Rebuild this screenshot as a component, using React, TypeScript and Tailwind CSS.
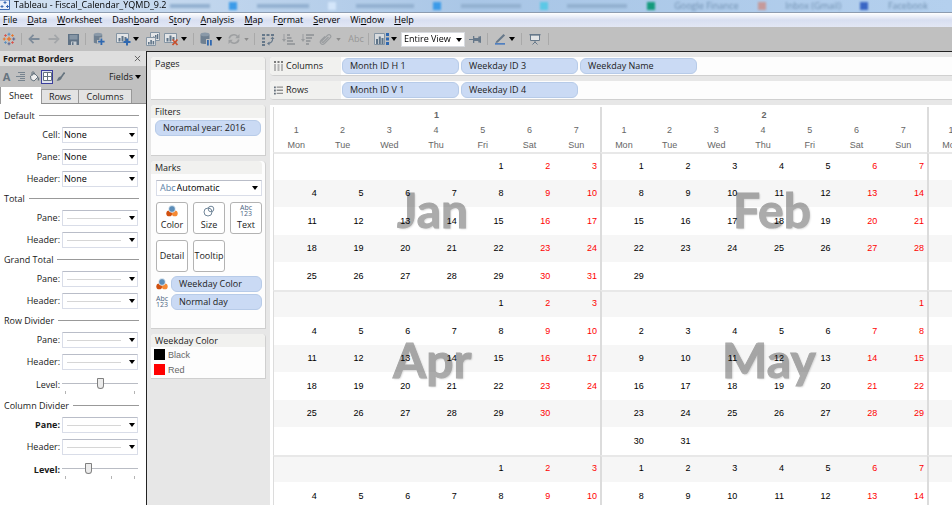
import React from 'react'

const menus = [
  { before: '', key: 'F', after: 'ile' },
  { before: '', key: 'D', after: 'ata' },
  { before: '', key: 'W', after: 'orksheet' },
  { before: 'Dash', key: 'b', after: 'oard' },
  { before: 'S', key: 't', after: 'ory' },
  { before: '', key: 'A', after: 'nalysis' },
  { before: '', key: 'M', after: 'ap' },
  { before: 'F', key: 'o', after: 'rmat' },
  { before: '', key: 'S', after: 'erver' },
  { before: 'Wi', key: 'n', after: 'dow' },
  { before: '', key: 'H', after: 'elp' },
]

interface Row {
  label: string
  value?: string
  bold?: boolean
  steps?: number
  level?: number
}

interface Section {
  title: string
  rows: Row[]
}

const sections: Section[] = [
  {
    title: 'Default',
    rows: [
      { label: 'Cell:', value: 'None' },
      { label: 'Pane:', value: 'None' },
      { label: 'Header:', value: 'None' },
    ],
  },
  { title: 'Total', rows: [{ label: 'Pane:' }, { label: 'Header:' }] },
  { title: 'Grand Total', rows: [{ label: 'Pane:' }, { label: 'Header:' }] },
  {
    title: 'Row Divider',
    rows: [{ label: 'Pane:' }, { label: 'Header:' }, { label: 'Level:', steps: 2, level: 1 }],
  },
  {
    title: 'Column Divider',
    rows: [
      { label: 'Pane:', bold: true },
      { label: 'Header:' },
      { label: 'Level:', bold: true, steps: 3, level: 1 },
    ],
  },
]

const weekdays = ['Mon', 'Tue', 'Wed', 'Thu', 'Fri', 'Sat', 'Sun']

// offset = empty cells before day 1, weeks = rows kept for each block
const blocks = [
  { weeks: 5, months: [{ offset: 4, days: 31 }, { offset: 0, days: 29 }] },
  { weeks: 6, months: [{ offset: 4, days: 30 }, { offset: 6, days: 31 }] },
  { weeks: 2, months: [{ offset: 4, days: 31 }, { offset: 0, days: 31 }] },
]

function Caret({ muted }: { muted?: boolean }) {
  return (
    <svg viewBox="0 0 6 4" className={muted ? 'w-[5px] h-[3px] text-[#8c8c8c]' : 'w-[6px] h-[4px] text-black'}>
      <path d="M0 0h6L3 4z" fill="currentColor" />
    </svg>
  )
}

function ColorIcon() {
  return (
    <svg viewBox="0 0 12 12" className="w-3 h-3">
      <circle cx="3.2" cy="8.4" r="2.9" fill="#d1500f" />
      <circle cx="8.8" cy="8.4" r="2.9" fill="#f58a35" />
      <circle cx="6" cy="4" r="3.4" fill="#5b8db8" stroke="#fff" strokeWidth=".7" />
    </svg>
  )
}

function AbcIcon() {
  return (
    <span className="block text-[7px] leading-[6px] text-center text-[#4c657f]">
      Abc
      <br />
      123
    </span>
  )
}

function Tool({ label, className, children }: { label: string; className: string; children: React.ReactNode }) {
  return (
    <button type="button" aria-label={label} className={'shrink-0 flex items-center justify-center ' + className}>
      {children}
    </button>
  )
}

function Divider({ className }: { className: string }) {
  return <span className={'shrink-0 w-px h-3 bg-[#a9a9a9] ' + className} />
}

function Toolbar() {
  return (
    <div className="flex items-center h-[24px] pl-[2px] bg-[#c0c0c0] overflow-hidden">
      <Tool label="Start page" className="w-[14px]">
        <svg viewBox="0 0 14 14" className="w-[14px] h-[14px]" fill="none" strokeWidth="1.1">
          <path d="M7 4.8v4.4M4.8 7h4.4" stroke="#e8762c" strokeWidth="1.4" />
          <path d="M7 .8v3M5.5 2.3h3" stroke="#5b8fbf" />
          <path d="M7 10.2v3M5.5 11.7h3" stroke="#5b6591" />
          <path d="M.8 7h3M2.3 5.5v3" stroke="#e8762c" />
          <path d="M10.2 7h3M11.7 5.5v3" stroke="#5b6591" />
          <path d="M3.5 2.2v2.6M2.2 3.5h2.6" stroke="#d9534a" />
          <path d="M10.5 2.2v2.6M9.2 3.5h2.6" stroke="#e8762c" />
          <path d="M3.5 9.2v2.6M2.2 10.5h2.6" stroke="#5b8fbf" />
          <path d="M10.5 9.2v2.6M9.2 10.5h2.6" stroke="#d9534a" />
        </svg>
      </Tool>
      <Divider className="ml-[5px]" />
      <Tool label="Undo" className="w-3 ml-[6px]">
        <svg viewBox="0 0 12 10" className="w-3 h-[10px]" fill="none" stroke="#7d8b99" strokeWidth="1.8">
          <path d="M5.5 .8L1.5 5l4 4.2M1.5 5h10" />
        </svg>
      </Tool>
      <Tool label="Redo" className="w-3 ml-2">
        <svg viewBox="0 0 12 10" className="w-3 h-[10px]" fill="none" stroke="#a3a6a9" strokeWidth="1.8">
          <path d="M6.5 .8l4 4.2-4 4.2M10.5 5H.5" />
        </svg>
      </Tool>
      <Tool label="Save" className="w-[11px] ml-2">
        <svg viewBox="0 0 11 11" className="w-[11px] h-[11px]">
          <path d="M0 0h11v11H0z" fill="#5f7285" />
          <path d="M1.5 1h8v4.5h-8z" fill="#8595a4" />
          <path d="M3 7.5h5.5V11H3z" fill="#c4cad0" />
          <path d="M4 8.3h1.5V11H4z" fill="#5f7285" />
        </svg>
      </Tool>
      <Divider className="ml-[6px]" />
      <Tool label="Add data source" className="w-3 ml-[7px]">
        <svg viewBox="0 0 12 14" className="w-3 h-[14px]">
          <path d="M.8 2.400v8c1.500 1.500 7 1.500 8.400 0v-8z" fill="#6f8091" />
          <ellipse cx="5" cy="2.4" rx="4.2" ry="1.6" fill="#8a99a8" />
          <path d="M6.500 5.500h3.500V8H12.500v3.500H10V14H6.500v-2.500H4V8h2.500z" fill="#c0c0c0" />
          <path d="M7.500 6.500h1.800v2.300H11.600v1.800H9.300v2.400H7.500v-2.400H5.100V8.800h2.400z" fill="#2f68b0" />
        </svg>
      </Tool>
      <Tool label="New worksheet" className="w-[15px] ml-[11px]">
        <svg viewBox="0 0 15 14" className="w-[15px] h-[14px]">
          <path d="M.5 1.5h12v9H.5z" fill="#e3e5e7" stroke="#8494a3" />
          <path d="M2.5 6h2v3.5h-2zM5.5 4h2v5.5h-2zM8.5 5h2v4.5h-2z" fill="#5f7488" />
          <path d="M10 6.5h2V9h2.5v2H12v2.5h-2V11H7.5V9H10z" fill="#2f68b0" />
        </svg>
      </Tool>
      <span className="shrink-0 ml-[2px]"><Caret /></span>
      <Tool label="Duplicate sheet" className="w-[14px] ml-[7px]">
        <svg viewBox="0 0 14 14" className="w-[14px] h-[14px]">
          <path d="M4.5 .5h9v8h-9z" fill="#e3e5e7" stroke="#8494a3" />
          <path d="M9 3h1.5v4H9zM11 2h1.3v5H11zM7 4.5h1.3V7H7z" fill="#5f7488" />
          <path d="M.5 5.5h9v8h-9z" fill="#e3e5e7" stroke="#8494a3" />
          <path d="M2 10h1.6v2.5H2zM4.3 8h1.6v4.5H4.3zM6.6 9h1.6v3.5H6.6z" fill="#5f7488" />
        </svg>
      </Tool>
      <Tool label="Clear sheet" className="w-[15px] ml-1">
        <svg viewBox="0 0 15 14" className="w-[15px] h-[14px]">
          <path d="M.5 1.5h12v9H.5z" fill="#e3e5e7" stroke="#8494a3" />
          <path d="M2.5 6h2v3.5h-2zM5.5 3.5h2v6h-2zM8.5 5h2v3h-2z" fill="#5f7488" />
          <path d="M8.5 7.5l5 5.5M13.5 7.5l-5 5.5" stroke="#c8502e" strokeWidth="1.7" />
        </svg>
      </Tool>
      <span className="shrink-0 ml-[2px]"><Caret /></span>
      <Divider className="ml-[6px]" />
      <Tool label="Pause auto updates" className="w-3 ml-[6px]">
        <svg viewBox="0 0 12 14" className="w-3 h-[14px]">
          <path d="M.5 2.400v8.300C1 11.700 3.500 12 6 12V7h3.500V2.400z" fill="#6f8091" />
          <ellipse cx="5" cy="2.4" rx="4.5" ry="1.8" fill="#8a99a8" />
          <path d="M7 8h1.8v5.500H7zM10 8h1.800v5.500H10z" fill="#2f68b0" />
        </svg>
      </Tool>
      <span className="shrink-0 ml-1"><Caret /></span>
      <Tool label="Refresh" className="w-3 ml-[6px]">
        <svg viewBox="0 0 12 12" className="w-3 h-3" fill="none" stroke="#9d9fa1" strokeWidth="1.6">
          <path d="M1.2 5.500C1.800 1.800 7 .5 9.500 3.500M10.800 6.500C10.200 10.200 5 11.500 2.500 8.500" />
          <path d="M11.500 1v4.200H7.200zM.5 11V6.800h4.300z" fill="#9d9fa1" stroke="none" />
        </svg>
      </Tool>
      <span className="shrink-0 ml-1"><Caret muted /></span>
      <Divider className="ml-[5px]" />
      <Tool label="Swap rows and columns" className="w-[13px] ml-[7px]">
        <svg viewBox="0 0 13 13" className="w-[13px] h-[13px]" fill="#66788a">
          <path d="M0 1h3v2H0zM4.500 1h3v2h-3zM9 1h3v2H9zM0 4.500h3v2H0zM0 8h3v2H0zM0 11h3v2H0z" />
          <path d="M10.500 5c.5 3-1 5-4 5.500" fill="none" stroke="#66788a" strokeWidth="1.2" />
          <path d="M8.500 6l2-2.500 2 2.500zM7.500 8.500v4L5 10.500z" />
        </svg>
      </Tool>
      <Tool label="Sort ascending" className="w-[13px] ml-[7px]">
        <svg viewBox="0 0 13 12" className="w-[13px] h-3" fill="#999c9f">
          <path d="M1.500 1h1v6h-1zM0 6h4L2 9zM5 1h3v2H5zM5 4h4.500v2H5zM5 7h6v2H5zM5 10h8v2H5z" />
        </svg>
      </Tool>
      <Tool label="Sort descending" className="w-[13px] ml-[6px]">
        <svg viewBox="0 0 13 12" className="w-[13px] h-3" fill="#999c9f">
          <path d="M1.500 1h1v6h-1zM0 6h4L2 9zM5 1h8v2H5zM5 4h6v2H5zM5 7h4.500v2H5zM5 10h3v2H5z" />
        </svg>
      </Tool>
      <Tool label="Group members" className="w-[13px] ml-[5px]">
        <svg viewBox="0 0 13 13" className="w-[13px] h-[13px]" fill="none" stroke="#999c9f" strokeWidth="1.2">
          <path d="M9.500 4L4.500 9c-1 1-2.300-.3-1.300-1.300L8.700 2.200c1.700-1.700 4.300.7 2.600 2.400L5.500 10.500c-2.500 2.300-5.700-.8-3.400-3.300L6 3.300" />
        </svg>
      </Tool>
      <span className="shrink-0 ml-[4px]"><Caret muted /></span>
      <Tool label="Show mark labels" className="w-[18px] ml-[6px] text-[9px] leading-3 text-[#979797]">
        Abc
      </Tool>
      <Divider className="ml-[3px]" />
      <Tool label="Show cards" className="w-4 ml-[5px]">
        <svg viewBox="0 0 16 12" className="w-4 h-3">
          <path d="M.5 .5h10v11H.5z" fill="#d9dcdf" stroke="#8494a3" />
          <path d="M2 6h2v5H2zM4.800 3.500h2V11h-2zM7.500 5h2v6h-2z" fill="#5f7488" />
          <path d="M12 0h3v3h-3zM12 4.500h3v3h-3zM12 9h3v3h-3z" fill="#2f68b0" />
        </svg>
      </Tool>
      <span className="shrink-0 ml-px"><Caret /></span>
      <span className="relative shrink-0 ml-1 w-[64px] h-[15px]">
        <select aria-label="Fit" defaultValue="Entire View" className="block w-full h-full pl-[2px] appearance-none bg-white border border-[#d8dbe0] text-[9px] leading-3 text-black">
          <option>Entire View</option>
        </select>
        <span className="absolute right-[3px] top-[6px] pointer-events-none"><Caret /></span>
      </span>
      <Tool label="Fix axes" className="w-3 ml-1">
        <svg viewBox="0 0 12 9" className="w-3 h-[9px]" fill="#66788a">
          <path d="M0 4h4v1H0zM4 1h1.300v7H4zM5.300 3h4v3h-4zM9.300 1.500h1.200L12 1v7l-1.500-.5H9.300z" />
        </svg>
      </Tool>
      <Divider className="ml-[6px]" />
      <Tool label="Highlight" className="w-[13px] ml-[6px]">
        <svg viewBox="0 0 13 12" className="w-[13px] h-3">
          <path d="M2 8.500L9.500 1l1.600 1.500-7.300 7L1.500 10z" fill="#66788a" />
          <path d="M1 10h10v1.700H1z" fill="#4f7fc0" />
        </svg>
      </Tool>
      <span className="shrink-0 ml-[2px]"><Caret /></span>
      <Divider className="ml-[6px]" />
      <Tool label="Presentation mode" className="w-3 ml-[7px]">
        <svg viewBox="0 0 12 12" className="w-3 h-3">
          <path d="M1.500 2h9v5.500h-9z" fill="#e3e5e7" stroke="#66788a" />
          <path d="M.5 1h11v1.300H.5z" fill="#66788a" />
          <path d="M6 7.500v2M3.500 11.500L6 9l2.500 2.500" fill="none" stroke="#66788a" />
        </svg>
      </Tool>
      <Divider className="ml-[7px]" />
    </div>
  )
}

function FormatRow({ row, id }: { row: Row; id: string }) {
  if (row.steps) {
    return (
      <div className="flex items-center h-6">
        <label htmlFor={id} className={row.bold ? 'w-[60px] text-right font-bold' : 'w-[60px] text-right'}>
          {row.label}
        </label>
        <span className="relative ml-[2px] flex-1 mr-2 h-[18px]">
          <input
            id={id}
            type="range"
            min={0}
            max={row.steps}
            defaultValue={row.level}
            className="block w-full h-[14px] appearance-none bg-transparent [&::-webkit-slider-runnable-track]:h-px [&::-webkit-slider-runnable-track]:bg-[#b9bcc4] [&::-webkit-slider-thumb]:appearance-none [&::-webkit-slider-thumb]:w-[7px] [&::-webkit-slider-thumb]:h-[11px] [&::-webkit-slider-thumb]:-mt-[5px] [&::-webkit-slider-thumb]:rounded-b-[4px] [&::-webkit-slider-thumb]:rounded-t-[1px] [&::-webkit-slider-thumb]:border [&::-webkit-slider-thumb]:border-[#808080] [&::-webkit-slider-thumb]:bg-[#ececec]"
          />
          <span className="absolute left-[3px] right-[3px] bottom-0 flex justify-between pointer-events-none">
            {Array.from({ length: row.steps + 1 }, (_, i) => (
              <i key={i} className={i === row.level ? 'w-px h-[3px]' : 'w-px h-[3px] bg-[#b4b4b4]'} />
            ))}
          </span>
        </span>
      </div>
    )
  }
  return (
    <div className="flex items-center h-[22px]">
      <label htmlFor={id} className={row.bold ? 'w-[60px] text-right font-bold' : 'w-[60px] text-right'}>
        {row.label}
      </label>
      <span className="relative ml-[2px] flex-1 mr-2 h-4">
        <select
          id={id}
          defaultValue={row.value || ''}
          className="block w-full h-full pl-px appearance-none bg-white border border-[#d9dde8] border-t-[#b9bdc8] rounded-[1px] text-black"
        >
          <option>{row.value || ''}</option>
        </select>
        {!row.value && <i className="absolute left-[5px] right-[17px] top-[8px] h-px bg-[#d6d6d6] pointer-events-none" />}
        <span className="absolute right-[3px] top-[6px] pointer-events-none"><Caret /></span>
      </span>
    </div>
  )
}

function FormatPane() {
  return (
    <aside className="w-[147px] shrink-0 flex flex-col bg-white border-r border-[#222]">
      <div className="flex items-center justify-between h-[15px] pl-[3px] pr-[5px] bg-[#dedede]">
        <h2 className="font-bold">Format Borders</h2>
        <button type="button" aria-label="Close">
          <svg viewBox="0 0 8 8" className="w-[7px] h-[7px]" stroke="#555" strokeWidth="1">
            <path d="M1 1l6 6M7 1L1 7" />
          </svg>
        </button>
      </div>
      <div className="flex items-center h-[21px] pl-[2px] pr-[5px] bg-[#c0c0c0]">
        <Tool label="Font" className="w-[9px]">
          <span className="text-[11px] leading-3 font-bold text-[#66747f]">A</span>
        </Tool>
        <Tool label="Alignment" className="w-[9px] ml-[5px]">
          <svg viewBox="0 0 9 9" className="w-[9px] h-[9px]" fill="#77848f">
            <path d="M2 0h7v1H2zM4 2h5v1H4zM0 4h9v1H0zM4 6h5v1H4zM2 8h7v1H2z" />
          </svg>
        </Tool>
        <Tool label="Shading" className="w-[11px] ml-1">
          <svg viewBox="0 0 11 11" className="w-[11px] h-[11px]" stroke="#66747f" fill="#eee">
            <path d="M1.500 5L5 2l4 4-4 4-3-1.500z" />
            <path d="M3 5V1.500C3 .5 5 .5 5 1.500V4" fill="none" />
            <path d="M9.500 6.500v3" strokeWidth="1.500" />
          </svg>
        </Tool>
        <Tool label="Borders" className="w-3 h-[14px] ml-[1px] bg-[#dfe2ee] border border-[#3b3f9c]">
          <svg viewBox="0 0 9 9" className="w-[9px] h-[9px]" fill="#fff" stroke="#66747f">
            <path d="M.5 .5h8v8h-8zM4.500 .5v8M.5 4.500h8" />
          </svg>
        </Tool>
        <Tool label="Lines" className="w-[9px] ml-[3px]">
          <svg viewBox="0 0 9 9" className="w-[9px] h-[9px]">
            <path d="M8.500 .5L5 5.500" stroke="#66747f" strokeWidth="1.600" />
            <path d="M4.800 4.500L6 5.800C5 8.500 2.500 9 .5 8.500c1.300-.5 1-3.500 4.300-4z" fill="#66747f" />
          </svg>
        </Tool>
        <button type="button" className="ml-auto flex items-center gap-[2px]">
          Fields <Caret />
        </button>
      </div>
      <div role="tablist" className="flex items-end h-[17px] bg-[#c0c0c0] border-b border-[#8f8f8f]">
        <button type="button" role="tab" aria-selected="true" className="w-[41px] h-[17px] -mb-px bg-white border-l border-[#999]">Sheet</button>
        <button type="button" role="tab" aria-selected="false" className="w-[38px] h-[14px] bg-[#e3e3e3] border border-b-0 border-[#999]">Rows</button>
        <button type="button" role="tab" aria-selected="false" className="w-[53px] h-[14px] bg-[#e3e3e3] border border-b-0 border-l-0 border-[#999]">Columns</button>
      </div>
      <div className="flex-1 pt-[3px]">
        {sections.map((section) => (
          <fieldset key={section.title}>
            <div className="flex items-center h-[17px] pl-1 pr-[7px] gap-1">
              <span>{section.title}</span>
              <i className="flex-1 h-px bg-[#999]" />
            </div>
            {section.rows.map((row, i) => (
              <FormatRow key={i} row={row} id={section.title.replace(' ', '-') + '-' + i} />
            ))}
          </fieldset>
        ))}
      </div>
    </aside>
  )
}

function Pill({ children, className }: { children: React.ReactNode; className: string }) {
  return (
    <button type="button" className={'h-4 pl-[7px] text-left text-[#222] bg-[#cadaf4] border border-[#b7cbe8] rounded-md ' + className}>
      {children}
    </button>
  )
}

function Card({ title, className, children }: { title: string; className: string; children?: React.ReactNode }) {
  return (
    <section className={'bg-[#fdfdfd] rounded-t-[4px] border-r border-b border-[#cfcfcf] ' + className}>
      <h3 className="h-[13px] pl-1 leading-[13px] bg-[#f1f1ef] rounded-t-[4px]">{title}</h3>
      {children}
    </section>
  )
}

function Cards() {
  return (
    <div className="w-[115px] shrink-0 flex flex-col">
      <Card title="Pages" className="h-[43px]" />
      <Card title="Filters" className="h-[51px] mt-[5px]">
        <div className="px-1 pt-[2px]">
          <Pill className="block w-full">Noramal year: 2016</Pill>
        </div>
      </Card>
      <Card title="Marks" className="h-[168px] mt-[5px] pr-[3px]">
        <div className="pl-[5px]">
          <div className="relative h-4 mt-[6px] flex items-center bg-white border border-[#d9dde8] border-t-[#b9bdc8]">
            <span className="pl-[3px] text-[#5c83a8]">Abc</span>
            <select aria-label="Mark type" defaultValue="Automatic" className="flex-1 h-full pl-px appearance-none bg-transparent text-black">
              <option>Automatic</option>
            </select>
            <span className="absolute right-[3px] top-[5px] pointer-events-none"><Caret /></span>
          </div>
          <div className="grid grid-cols-3 gap-x-[5px] gap-y-[6px] mt-[6px]">
            <button type="button" className="h-8 flex flex-col items-center justify-end gap-[2px] bg-white border border-[#b3b3b3] rounded-[3px]">
              <ColorIcon />
              <span className="h-[14px]">Color</span>
            </button>
            <button type="button" className="h-8 flex flex-col items-center justify-end gap-[2px] bg-white border border-[#b3b3b3] rounded-[3px]">
              <svg viewBox="0 0 12 12" className="w-3 h-3" fill="none" stroke="#72879a">
                <circle cx="5" cy="7" r="4" />
                <circle cx="8" cy="4" r="2.800" />
              </svg>
              <span className="h-[14px]">Size</span>
            </button>
            <button type="button" className="h-8 flex flex-col items-center justify-end gap-[2px] bg-white border border-[#b3b3b3] rounded-[3px]">
              <AbcIcon />
              <span className="h-[14px]">Text</span>
            </button>
            <button type="button" className="h-8 bg-white border border-[#b3b3b3] rounded-[3px]">Detail</button>
            <button type="button" className="h-8 flex items-center justify-center bg-white border border-[#b3b3b3] rounded-[3px]">Tooltip</button>
          </div>
          <div className="flex flex-col gap-[2px] mt-1">
            <div className="flex items-center">
              <ColorIcon />
              <Pill className="ml-[3px] flex-1">Weekday Color</Pill>
            </div>
            <div className="flex items-center">
              <span className="w-3 flex justify-center"><AbcIcon /></span>
              <Pill className="ml-[3px] flex-1">Normal day</Pill>
            </div>
          </div>
        </div>
      </Card>
      <Card title="Weekday Color" className="h-[45px] mt-[5px]">
        <ul className="pl-[3px] pt-[2px] flex flex-col gap-1 font-['Liberation_Sans',sans-serif] text-[#666]">
          <li className="flex items-center gap-[3px] h-[11px]"><i className="w-[11px] h-[11px] bg-black" />Black</li>
          <li className="flex items-center gap-[3px] h-[11px]"><i className="w-[11px] h-[11px] bg-[#f00]" />Red</li>
        </ul>
      </Card>
    </div>
  )
}

function Shelf({ title, fields, icon }: { title: string; fields: string[]; icon: React.ReactNode }) {
  return (
    <div className="flex items-center h-[19px] bg-[#fdfdfd] border-b border-[#d0d0d0] rounded-l-[4px]">
      <div className="flex items-center w-[71px] h-full pl-1 gap-[3px] bg-[#f1f1ef] rounded-l-[4px] text-[9px]">
        {icon}
        {title}
      </div>
      <div className="flex gap-[2px] pl-px">
        {fields.map((field) => (
          <Pill key={field} className="w-[117px]">{field}</Pill>
        ))}
      </div>
    </div>
  )
}

function Calendar() {
  let line = 0
  const monthStart = 'border-l-2 border-l-[#dcdcdc]'
  const firstMonth = 'border-l border-l-[#dcdcdc]'

  return (
    <div className="relative flex-1 pl-[3px] pt-[2px] bg-white overflow-hidden">
      <table className="w-[701px] table-fixed border-separate border-spacing-0 font-['Liberation_Sans',sans-serif] text-[9px] leading-3">
        <thead className="text-[#666]">
          <tr className="h-[15px]">
            <th colSpan={7} className={'p-0 pr-px font-bold ' + firstMonth}>1</th>
            <th colSpan={7} className={'p-0 pr-px font-bold ' + monthStart}>2</th>
            <th className={'p-0 ' + monthStart}></th>
          </tr>
          <tr className="h-[15px]">
            {[...weekdays, ...weekdays, 'Mon'].map((_, i) => (
              <th key={i} className={'p-0 pr-px font-normal ' + (i === 0 ? firstMonth : i % 7 === 0 ? monthStart : '')}>
                {(i % 7) + 1}
              </th>
            ))}
          </tr>
          <tr className="h-[15px]">
            {[...weekdays, ...weekdays, 'Mon'].map((day, i) => (
              <th key={i} className={'p-0 pr-px font-normal ' + (i === 0 ? firstMonth : i % 7 === 0 ? monthStart : '')}>
                {day}
              </th>
            ))}
          </tr>
        </thead>
        <tbody>
          {blocks.map((block, b) =>
            Array.from({ length: block.weeks }, (_, week) => {
              const odd = line++ % 2 === 1
              return (
                <tr key={b + '-' + week} className={odd ? 'h-[27px] bg-[#f6f6f6]' : 'h-7'}>
                  {block.months.map((month, m) =>
                    weekdays.map((day, d) => {
                      const date = week * 7 + d + 1 - month.offset
                      return (
                        <td
                          key={m + day}
                          className={
                            'p-0 pr-[3px] text-right ' +
                            (d > 4 ? 'text-[#f00] ' : 'text-black ') +
                            (week === 0 ? 'pb-[3px] border-t-2 border-t-[#e8e8e8] ' : 'pb-px ') +
                            (d > 0 ? '' : m === 0 ? firstMonth : monthStart)
                          }
                        >
                          {date > 0 && date <= month.days ? date : ''}
                        </td>
                      )
                    })
                  )}
                  <td className={'p-0 ' + monthStart + (week === 0 ? ' border-t-2 border-t-[#e8e8e8]' : '')}></td>
                </tr>
              )
            })
          )}
        </tbody>
      </table>

      {/* month names laid over the days, multiplied so the dates stay dark */}
      <div className="absolute inset-0 mix-blend-multiply font-['Lato',sans-serif] font-bold text-[48px] leading-[48px] text-[#ababab] [-webkit-text-stroke:1px_#ababab] [text-shadow:1px_1px_2px_#00000033] pointer-events-none">
        <span className="absolute left-[127px] top-[81px]">Jan</span>
        <span className="absolute left-[463px] top-[81px]">Feb</span>
        <span className="absolute left-[123px] top-[231px]">Apr</span>
        <span className="absolute left-[452px] top-[231px]">May</span>
      </div>
    </div>
  )
}

function App() {
  return (
    <div className="flex flex-col h-screen overflow-hidden font-['Open_Sans','Noto_Sans',sans-serif] text-[9px] leading-3 text-[#1a1a1a]">
      <header className="relative flex items-start h-3 overflow-hidden bg-linear-to-r from-[#d3e2f3] via-[#a9c6e6] to-[#b4d0ee]">
        <svg viewBox="0 0 10 10" className="w-[10px] h-[10px]" fill="none" stroke="#3d6cb4">
          <path d="M0 0h9.500v9.500H0" fill="#eaf1fb" />
          <path d="M5 1v3M3.500 2.500h3M2 5v3M.5 6.500h3M7.500 5v3M6 6.500h3" />
        </svg>
        <h1 className="pl-1 leading-[9px] text-black whitespace-nowrap">Tableau - Fiscal_Calendar_YQMD_9.2</h1>
        <div aria-hidden="true" className="absolute inset-y-0 left-[170px] right-0 flex items-center justify-between pr-[24px] blur-[1px] text-[#6f8fb0]">
          <i className="w-10 h-1 bg-[#93b1d0]" />
          <i className="w-2 h-2 bg-[#3c9be8]" />
          <i className="w-[52px] h-1 bg-[#93b1d0]" />
          <i className="w-2 h-2 bg-[#d4e6fa]" />
          <i className="w-[58px] h-1 bg-[#93b1d0]" />
          <i className="w-2 h-2 bg-[#3c9be8]" />
          <i className="w-[60px] h-1 bg-[#93b1d0]" />
          <i className="w-2 h-2 bg-[#5cc8e6]" />
          <i className="w-[60px] h-1 bg-[#93b1d0]" />
          <i className="w-2 h-2 bg-[#149a7c]" />
          <span>Google Finance</span>
          <i className="w-2 h-2 bg-[#c59a9a]" />
          <span>Inbox (Gmail)</span>
          <i className="w-2 h-2 bg-[#3a66c4]" />
          <span>Facebook</span>
        </div>
      </header>
      <nav className="flex items-center gap-[10px] h-[15px] pl-[3px] border-t border-[#8d9cb0] bg-linear-to-b from-white via-[#d8dff1] to-[#e2e7f5]">
        {menus.map((m) => (
          <button key={m.after} type="button" className="text-black">
            {m.before}<u>{m.key}</u>{m.after}
          </button>
        ))}
      </nav>
      <Toolbar />
      <div className="flex flex-1 min-h-0">
        <FormatPane />
        <main className="flex flex-1 min-w-0 pl-1 pt-[5px] bg-[#e7e7e7] border-t border-[#222]">
          <Cards />
          <div className="flex flex-col flex-1 min-w-0 ml-1 gap-[5px]">
            <Shelf
              title="Columns"
              fields={['Month ID H 1', 'Weekday ID 3', 'Weekday Name']}
              icon={
                <svg viewBox="0 0 9 10" className="w-[9px] h-[10px]" fill="#7b7b7b">
                  <path d="M0 0h2v2H0zM3.500 0h2v2h-2zM7 0h2v2H7z" />
                  <path d="M0 3h2v7H0zM3.500 3h2v7h-2zM7 3h2v7H7z" fill="#b5b5b5" />
                </svg>
              }
            />
            <Shelf
              title="Rows"
              fields={['Month ID V 1', 'Weekday ID 4']}
              icon={
                <svg viewBox="0 0 10 9" className="w-[9px] h-[9px]" fill="#66717c">
                  <path d="M0 0h2v2H0zM0 3.500h2v2H0zM0 7h2v2H0z" />
                  <path d="M3 0h7v1.500H3zM3 3.500h7V5H3zM3 7h7v1.500H3z" fill="#909090" />
                </svg>
              }
            />
            <Calendar />
          </div>
        </main>
      </div>
    </div>
  )
}

export default App
